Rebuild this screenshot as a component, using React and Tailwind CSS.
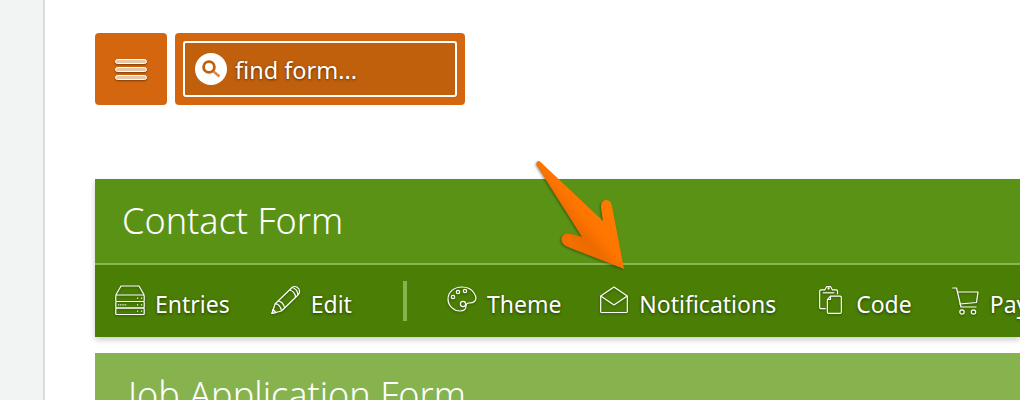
const font = "font-['Noto_Sans','Open_Sans',sans-serif]";

const ServerIcon = () => (
  <svg width="30" height="30" viewBox="0 0 30 30" fill="none" stroke="currentColor" strokeWidth="1.2" strokeLinejoin="round">
    <path d="M0.8 10 L6 1 H24 L29.2 10" />
    <rect x="0.8" y="10" width="28.4" height="6.5" rx="1" />
    <rect x="0.8" y="16.5" width="28.4" height="6.5" rx="1" />
    <rect x="0.8" y="23" width="28.4" height="6.5" rx="1" />
    <path d="M22 13.2h2M26 13.2h1.5M3 19.8h9M22 19.8h2M26 19.8h1.5M22 26.2h2M26 26.2h1.5" strokeDasharray="1.2 1" />
  </svg>
);

const PencilIcon = () => (
  <svg width="30" height="30" viewBox="0 0 30 30" fill="none" stroke="currentColor" strokeWidth="1.2" strokeLinejoin="round">
    <path d="M1 28.5 L4 19 L21 2.5 C24 0 29 3 28.5 7 C28.5 8 28 9 27 10 L10.5 26 Z" />
    <path d="M4 19 C7 18.5 10 21.5 10.5 26" />
    <path d="M7 16 C10 16 13 19 13.5 23M21 2.5 C24 3 27 6 27 10M18.5 5 C21.5 5.5 24.5 8.5 24.5 12.5" />
    <path d="M1 28.5 L2 24.5 L5 27.5 Z" />
  </svg>
);

const PaletteIcon = () => (
  <svg width="30" height="30" viewBox="0 0 30 30" fill="none" stroke="currentColor" strokeWidth="1.2" strokeLinejoin="round">
    <path d="M15 2 C7 2 1 7 1 14 C1 21 7 26 13 26 C17 26 19 24 19 21 C19 19 20 18 22 18 C24 18 26 18 27.5 16.5 C29.5 14.5 29 11 27 8 C24.5 4 20 2 15 2 Z" />
    <circle cx="6" cy="12" r="1.7" />
    <circle cx="11" cy="7" r="1.7" />
    <circle cx="18" cy="6" r="1.7" />
    <circle cx="16" cy="19" r="2.6" />
  </svg>
);

const EnvelopeIcon = () => (
  <svg width="28" height="28" viewBox="0 0 28 28" fill="none" stroke="currentColor" strokeWidth="1.2" strokeLinejoin="round">
    <path d="M0.7 10 L14 1 L27.3 10 V25.5 A1 1 0 0 1 26.3 26.5 H1.7 A1 1 0 0 1 0.7 25.5 Z" />
    <path d="M0.7 10 L14 19 L27.3 10" />
  </svg>
);

const ClipboardIcon = () => (
  <svg width="23" height="30" viewBox="0 0 24 30" fill="none" stroke="currentColor" strokeWidth="1.2" strokeLinejoin="round">
    <path d="M7 24 H2 A1.5 1.5 0 0 1 0.7 22.5 V6 A1.5 1.5 0 0 1 2 4.5 H6 L8 1 H12 L14 4.5 H18 A1.5 1.5 0 0 1 19.3 6 V9" />
    <path d="M4 7.5 H16" />
    <path d="M12 11 H22 A1.3 1.3 0 0 1 23.3 12.3 V27.7 A1.3 1.3 0 0 1 22 29 H10 A1.3 1.3 0 0 1 8.7 27.7 V14.5 Z" />
    <path d="M8.7 14.5 H12 V11" />
    <circle cx="10" cy="3" r="0.6" />
  </svg>
);

const CartIcon = () => (
  <svg width="27" height="30" viewBox="0 0 27 30" fill="none" stroke="currentColor" strokeWidth="1.2" strokeLinejoin="round" strokeLinecap="round">
    <path d="M0.7 3 H4.5 L9 22 H24" />
    <path d="M5.5 7 H26 L24.5 17.5 L7.8 19" />
    <circle cx="10" cy="27" r="2.2" />
    <circle cx="21.5" cy="27" r="2.2" />
  </svg>
);

const NavItem = ({ icon, label, gap = "gap-[10px]" }) => (
  <div className={`flex items-center ${gap} shrink-0`}>
    <span className="mb-[3px] flex drop-shadow-[0_1px_1px_rgba(0,0,0,0.35)]">{icon}</span>
    <span className="pt-[7px] text-[23px] leading-none [text-shadow:0_1px_3px_rgba(0,0,0,0.55)]">{label}</span>
  </div>
);

const Arrow = () => (
  <svg
    className="absolute left-[530px] top-[155px] drop-shadow-[-1px_1px_1px_rgba(0,0,0,0.35)]"
    width="100"
    height="120"
    viewBox="0 0 100 120"
  >
    <defs>
      <linearGradient id="arrowFill" x1="0.85" y1="0.45" x2="0.45" y2="0.85">
        <stop offset="0" stopColor="#ff7a00" />
        <stop offset="0.45" stopColor="#ff7500" />
        <stop offset="0.7" stopColor="#ec6a00" />
        <stop offset="1" stopColor="#f56f00" />
      </linearGradient>
    </defs>
    <path
      d="M7 7 Q8.5 5 10.5 7 L73 66 L71 53 Q70.5 46 75.5 45 Q81 44.5 82 51 L94 114 L38 92 Q31 89 31.5 83.5 Q33.5 77 41 79 L52 82 L6.5 10 Q6 8.5 7 7 Z"
      fill="url(#arrowFill)"
    />
  </svg>
);

export default function App() {
  return (
    <div className={`relative flex h-[400px] w-[1020px] overflow-hidden bg-white ${font}`}>
      <div className="w-[45px] shrink-0 border-r-2 border-[#d8dcdb] bg-[#f1f4f3]" />

      <div className="min-w-0 flex-1 pl-[50px] pt-[33px]">
        <div className="flex gap-2">
          <button className="flex h-[72px] w-[72px] flex-col items-center justify-center gap-[3px] rounded bg-[#d4660f]">
            <span className="h-[5px] w-8 rounded-full border border-white bg-[#e6c6a8] shadow-[0_1px_2px_rgba(0,0,0,0.4)]" />
            <span className="h-[5px] w-8 rounded-full border border-white bg-[#e6c6a8] shadow-[0_1px_2px_rgba(0,0,0,0.4)]" />
            <span className="h-[5px] w-8 rounded-full border border-white bg-[#e6c6a8] shadow-[0_1px_2px_rgba(0,0,0,0.4)]" />
          </button>
          <div className="h-[72px] w-[290px] rounded bg-[#d4660f] p-2">
            <div className="flex h-full items-center gap-2 rounded-[3px] border-2 border-white bg-[#c1600c] pl-[10px]">
              <span className="flex h-8 w-8 items-center justify-center rounded-full bg-white">
                <svg width="22" height="22" viewBox="0 0 22 22" fill="none" stroke="#c1600c">
                  <circle cx="9" cy="9" r="5.4" strokeWidth="2.8" />
                  <path d="M13.5 13.5 L19.5 18.5" strokeWidth="2.6" stroke="#d98a4a" />
                </svg>
              </span>
              <span className="pt-[4px] text-[23.5px] leading-none text-white [text-shadow:0_1px_3px_rgba(0,0,0,0.55)]">find form...</span>
            </div>
          </div>
        </div>

        <div className="mt-[74px] h-[158px] text-white shadow-[0_3px_6px_rgba(0,0,0,0.2)]">
          <div className="flex h-[84px] items-center bg-[#5a9216] pl-[27px]">
            <span className="text-[36px] font-light leading-none">Contact Form</span>
          </div>
          <div className="h-[2px] bg-[#8ab553]" />
          <div className="flex h-[72px] items-center overflow-hidden bg-[#4a7e05] pl-5">
            <NavItem icon={<ServerIcon />} label="Entries" />
            <div className="ml-[41px]">
              <NavItem icon={<PencilIcon />} label="Edit" />
            </div>
            <div className="ml-[51px] mr-10 h-10 w-1 shrink-0 bg-[#86b34e]" />
            <NavItem icon={<PaletteIcon />} label="Theme" />
            <div className="ml-[39px]">
              <NavItem icon={<EnvelopeIcon />} label="Notifications" gap="gap-[11px]" />
            </div>
            <div className="ml-[43px]">
              <NavItem icon={<ClipboardIcon />} label="Code" gap="gap-[14px]" />
            </div>
            <div className="ml-[40px]">
              <NavItem icon={<CartIcon />} label="Payment" gap="gap-[11px]" />
            </div>
          </div>
        </div>

        <div className="mt-4 flex h-[84px] items-center bg-[#86b34e] pl-[33px] text-white">
          <span className="text-[36px] font-light leading-none">Job Application Form</span>
        </div>
      </div>

      <Arrow />
    </div>
  );
}
